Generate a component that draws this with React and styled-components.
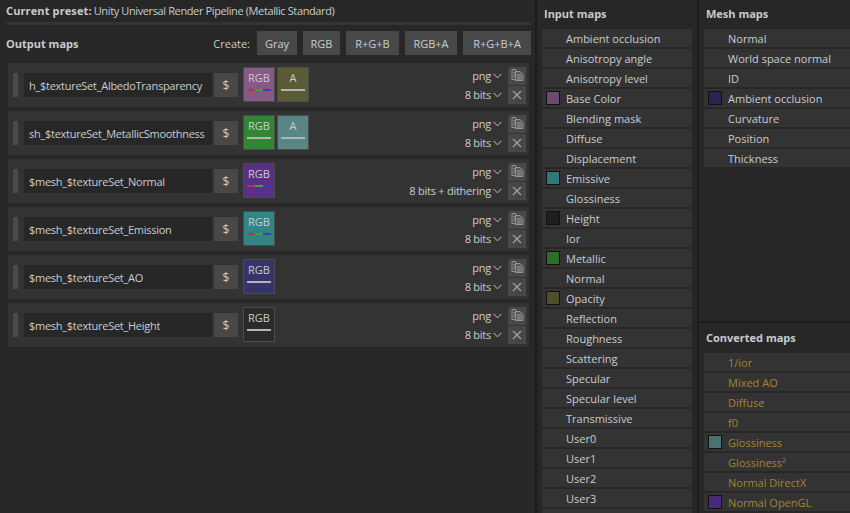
import React from 'react';
import styled, { createGlobalStyle } from 'styled-components';

const Global = createGlobalStyle`
  html, body { margin: 0; padding: 0; background: #1c1c1c; }
  #root { width: 850px; height: 513px; overflow: hidden; }
  * { box-sizing: border-box; }
`;

const Page = styled.div`
  width: 850px; height: 513px; overflow: hidden;
  display: grid; grid-template-columns: 535px 160px 151px; column-gap: 2px;
  background: #1c1c1c;
  font-family: "Open Sans", "Noto Sans", sans-serif;
  font-size: 11px; color: #c8cdd1;
`;
const Main = styled.div`
  background: #272727; height: 513px; padding: 0 4px 0 6px;
  display: flex; flex-direction: column;
`;
const Preset = styled.div`
  height: 22px; display: flex; align-items: center; gap: 2px; white-space: nowrap; padding-bottom: 2px;
`;
const Bold = styled.span`
  font-weight: 700; color: #c8ccce; letter-spacing: ${p => p.$ls || 0}px;
`;
const PresetName = styled.span`
  letter-spacing: -0.38px;
`;
const Rule = styled.div`
  height: 3px; width: 525px; background: #333333;
`;
const CreateBar = styled.div`
  height: 24px; margin-top: 6px; display: flex; align-items: center; width: 525px;
`;
const Grow = styled.div`
  flex: 1;
`;
const CreateLabel = styled.span`
  margin-right: 7px;
`;
const CreateBtn = styled.div`
  width: ${p => p.$w}px; height: 24px; margin-left: ${p => p.$first ? 0 : 6}px;
  background: #484848; display: flex; align-items: center; justify-content: center; white-space: nowrap;
`;
const Rows = styled.div`
  margin: 8px 0 0 2px; width: 521px; display: flex; flex-direction: column; gap: 4px;
`;
const Row = styled.div`
  height: 44px; background: #333333; display: flex; align-items: center; padding: 0 3px 1px 5px;
`;
const Handle = styled.div`
  width: 5px; height: 24px; background: #4a4a4a; margin-right: 6px;
`;
const NameBox = styled.div`
  width: 188px; height: 24px; background: #272727; display: flex; align-items: center;
  padding: 1px 0 0 5px; letter-spacing: -0.27px; white-space: nowrap; overflow: hidden;
`;
const Dollar = styled.div`
  width: 24px; height: 24px; margin-left: 2px; margin-right: 5px; background: #484848;
  display: flex; align-items: center; justify-content: center; padding-top: 1px; font-size: 12px;
`;
const Channels = styled.div`
  display: flex; gap: 2px;
`;
const Channel = styled.div`
  width: 32px; height: 35px; background: ${p => p.$bg}; border: 1px solid #4c4c4c;
  display: flex; flex-direction: column; align-items: center; padding-top: 2px; line-height: 15px;
`;
const Bar = styled.div`
  width: 24px; height: 2px; margin-top: 4px; display: flex; background: #b4b4b4;
`;
const BarPart = styled.div`
  flex: 1; background: ${p => p.$c};
`;
const Formats = styled.div`
  flex: 1; display: flex; flex-direction: column; align-items: flex-end; margin-right: 6px; margin-top: 1px;
`;
const Format = styled.div`
  height: 19px; display: flex; align-items: center; gap: 2px; white-space: nowrap; letter-spacing: -0.25px;
`;
const Actions = styled.div`
  display: flex; flex-direction: column; gap: 1px; margin-top: 1px;
`;
const Action = styled.div`
  width: 18px; height: 18px; background: #484848; display: flex; align-items: center; justify-content: center;
`;
const Side = styled.div`
  background: #272727; height: 513px; padding: 0 5px 0 5px; overflow: hidden;
`;
const Stack = styled.div`
  height: 513px; display: flex; flex-direction: column; gap: 2px; overflow: hidden;
`;
const Pane = styled.div`
  background: #272727; height: ${p => p.$h}px; padding-left: 5px; overflow: hidden; flex: none;
`;
const Title = styled.div`
  height: ${p => p.$h || 29}px; display: flex; align-items: center; font-weight: 700; color: #c8ccce;
  padding: 0 0 ${p => p.$pb || 0}px 2px;
`;
const List = styled.div`
  display: flex; flex-direction: column; gap: 2px;
`;
const Item = styled.div`
  height: 18px; background: #333333; display: flex; align-items: center; flex: none; white-space: nowrap;
  padding-left: 4px; color: ${p => p.$warm ? '#a3862f' : '#c8cdd1'};
`;
const Dot = styled.div`
  width: 14px; height: 14px; margin-right: 6px; flex: none;
  background: ${p => p.$c || 'transparent'}; border: 1px solid ${p => p.$c ? '#111' : 'transparent'};
`;

const Chevron = () => (
  <svg width="9" height="6" viewBox="0 0 9 6" fill="none" stroke="#c3c8cc" strokeWidth="1"><path d="M0.5 0.8 L4.5 4.8 L8.5 0.8" /></svg>
);
const CopyIcon = () => (
  <svg width="13" height="13" viewBox="0 0 13 13" fill="none" stroke="#959595" strokeWidth="1">
    <path d="M4.5 3.5 V0.5 H1 V10.5 H4" />
    <path d="M2 3.5 H4 M2 5.5 H4 M2 7.5 H4" strokeWidth="0.8" />
    <path d="M4.5 2.5 H9 L12 5.5 V11.5 H4.5 Z" fill="#5a5a5a" />
    <path d="M6 6 H10.5 M6 8 H10.5 M6 10 H10.5" />
  </svg>
);
const CloseIcon = () => (
  <svg width="10" height="10" viewBox="0 0 10 10" fill="none" stroke="#a4a4a4" strokeWidth="1.1"><path d="M1 1 L9 9 M9 1 L1 9" /></svg>
);

const RGB = ['#a93a42', '#3da53d', '#3c3cb0'];
const outputs = [
  { name: 'h_$textureSet_AlbedoTransparency', bits: '8 bits', ch: [{ l: 'RGB', bg: '#855a85', rgb: true }, { l: 'A', bg: '#5a5a35' }] },
  { name: 'sh_$textureSet_MetallicSmoothness', bits: '8 bits', ch: [{ l: 'RGB', bg: '#338533' }, { l: 'A', bg: '#5a8585' }] },
  { name: '$mesh_$textureSet_Normal', bits: '8 bits + dithering', ch: [{ l: 'RGB', bg: '#5a3085', rgb: true }] },
  { name: '$mesh_$textureSet_Emission', bits: '8 bits', ch: [{ l: 'RGB', bg: '#338585', rgb: true }] },
  { name: '$mesh_$textureSet_AO', bits: '8 bits', ch: [{ l: 'RGB', bg: '#35356a' }] },
  { name: '$mesh_$textureSet_Height', bits: '8 bits', ch: [{ l: 'RGB', bg: '#2a2a2a' }] },
];
const inputs = [
  ['Ambient occlusion'], ['Anisotropy angle'], ['Anisotropy level'], ['Base Color', '#6e4a72'], ['Blending mask'],
  ['Diffuse'], ['Displacement'], ['Emissive', '#2a7a7a'], ['Glossiness'], ['Height', '#1e1e1e'], ['Ior'],
  ['Metallic', '#2c6e2c'], ['Normal'], ['Opacity', '#4e4e28'], ['Reflection'], ['Roughness'], ['Scattering'],
  ['Specular'], ['Specular level'], ['Transmissive'], ['User0'], ['User1'], ['User2'], ['User3'], [''],
];
const mesh = [
  ['Normal'], ['World space normal'], ['ID'], ['Ambient occlusion', '#25254f'], ['Curvature'], ['Position'], ['Thickness'],
];
const converted = [
  ['1/ior'], ['Mixed AO'], ['Diffuse'], ['f0'], ['Glossiness', '#4a7272'], ['Glossiness²'], ['Normal DirectX'], ['Normal OpenGL', '#4a2a7a'],
];
const creates = [['Gray', 40], ['RGB', 37], ['R+G+B', 53], ['RGB+A', 52], ['R+G+B+A', 68]];

const MapList = ({ items, warm }) => (
  <List>
    {items.map(([t, c]) => <Item key={t} $warm={warm}><Dot $c={c} />{t}</Item>)}
  </List>
);

export default function App() {
  return (
    <Page>
      <Global />
      <Main>
        <Preset><Bold $ls={0.12}>Current preset:</Bold><PresetName>Unity Universal Render Pipeline (Metallic Standard)</PresetName></Preset>
        <Rule />
        <CreateBar>
          <Bold>Output maps</Bold>
          <Grow />
          <CreateLabel>Create:</CreateLabel>
          {creates.map(([t, w], i) => <CreateBtn key={t} $w={w} $first={i === 0}>{t}</CreateBtn>)}
        </CreateBar>
        <Rows>
          {outputs.map(o => (
            <Row key={o.name}>
              <Handle />
              <NameBox>{o.name}</NameBox>
              <Dollar>$</Dollar>
              <Channels>
                {o.ch.map(c => (
                  <Channel key={c.l} $bg={c.bg}>
                    {c.l}
                    <Bar>{c.rgb && RGB.map(x => <BarPart key={x} $c={x} />)}</Bar>
                  </Channel>
                ))}
              </Channels>
              <Formats>
                <Format>png <Chevron /></Format>
                <Format>{o.bits} <Chevron /></Format>
              </Formats>
              <Actions>
                <Action><CopyIcon /></Action>
                <Action><CloseIcon /></Action>
              </Actions>
            </Row>
          ))}
        </Rows>
      </Main>
      <Side>
        <Title $pb={3}>Input maps</Title>
        <MapList items={inputs} />
      </Side>
      <Stack>
        <Pane $h={321}>
          <Title $pb={3}>Mesh maps</Title>
          <MapList items={mesh} />
        </Pane>
        <Pane $h={190}>
          <Title $h={30} $pb={2}>Converted maps</Title>
          <MapList items={converted} warm />
        </Pane>
      </Stack>
    </Page>
  );
}
